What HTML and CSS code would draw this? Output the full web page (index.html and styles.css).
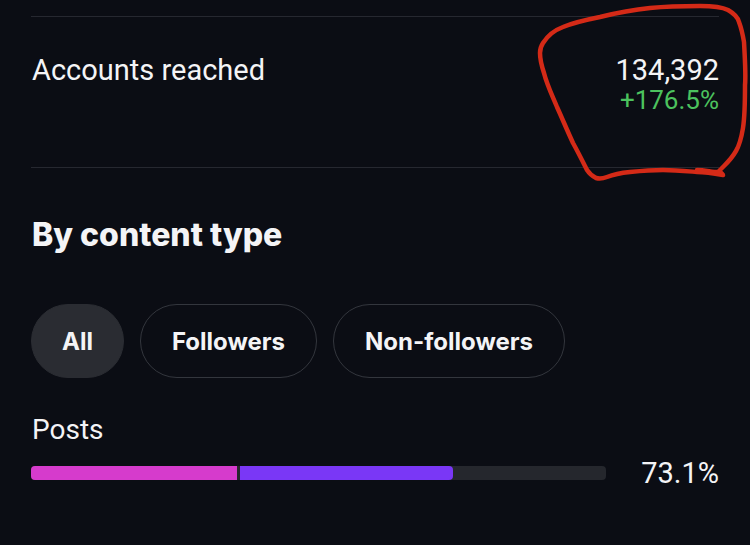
FILE: index.html
```html
<!DOCTYPE html>
<html>
<head>
<meta charset="utf-8">
<link rel="stylesheet" href="styles.css">
</head>
<body>
<div class="page">
  <div class="divider first"></div>
  <div class="metric">
    <div class="metric-label">Accounts reached</div>
    <div class="metric-values">
      <div class="metric-value">134,392</div>
      <div class="metric-change">+176.5%</div>
    </div>
  </div>
  <div class="divider"></div>
  <h2 class="section-title">By content type</h2>
  <div class="chips">
    <div class="chip active">All</div>
    <div class="chip">Followers</div>
    <div class="chip">Non-followers</div>
  </div>
  <div class="type-row">
    <div class="type-label">Posts</div>
    <div class="type-bar-row">
      <div class="bar">
        <div class="seg seg-followers" style="width:206px"></div>
        <div class="seg seg-non" style="width:213px"></div>
      </div>
      <div class="type-pct">73.1%</div>
    </div>
  </div>
</div>
<svg class="annotation" width="750" height="545" viewBox="0 0 750 545">
  <path d="M543 43 C548 35 555 30 563 27 C575 22 590 19 600 17 C620 12 640 9 650 8 C670 6 690 6 700 6 C712 6 722 7 728 10 C735 14 738 18 739 22 C742 30 743 36 744 42 C745 60 746 75 745 85 C745 100 745 115 743 128 C741 140 739 146 736 151 C732 158 728 162 724 166 C722 168 720 170 719 171 M723 175 C712 173 704 172 697 172 C685 171 675 170 663 170 C650 170 640 171 630 172 C620 173 612 175 607 177 C602 179 599 179 596 178 C592 176 589 173 587 170 C582 160 578 152 573 143 C567 130 562 118 557 107 C552 95 547 85 544 73 C541 64 540 58 540 53 C540 49 541 46 543 43 M697 170 C705 170 712 172 718 172 C720 172 722 173 723 175" />
</svg>
</body>
</html>
```
FILE: styles.css
```css
html, body {
  margin: 0;
  padding: 0;
  background: #0b0d14;
}
body {
  width: 750px;
  height: 545px;
  overflow: hidden;
  position: relative;
  font-family: Roboto, "Liberation Sans", sans-serif;
  color: #f4f4f6;
}
.page {
  padding: 0 31px;
}
.divider {
  height: 1px;
  background: #262830;
}
.divider.first {
  margin-top: 16px;
}
.metric {
  height: 150px;
  box-sizing: border-box;
  padding-top: 36px;
  display: flex;
  justify-content: space-between;
  align-items: flex-start;
}
.metric-label {
  font-size: 29px;
  line-height: 34px;
  padding-left: 1px;
}
.metric-values {
  text-align: right;
}
.metric-value {
  font-size: 29px;
  line-height: 34px;
}
.metric-change {
  font-size: 26px;
  line-height: 26px;
  color: #4cc25e;
}
.section-title {
  margin: 49px 0 0 1px;
  font-family: Inter, Roboto, sans-serif;
  font-size: 32px;
  line-height: 36px;
  font-weight: 800;
  letter-spacing: 0;
}
.chips {
  display: flex;
  gap: 16px;
  margin-top: 51px;
}
.chip {
  height: 74px;
  box-sizing: border-box;
  border: 1.5px solid #33363d;
  border-radius: 37px;
  padding: 0 31px;
  display: flex;
  align-items: center;
  font-family: Inter, Roboto, sans-serif;
  font-size: 24px;
  font-weight: 700;
}
.chip.active {
  background: #2a2c32;
  border-color: #2a2c32;
  padding: 0 30px;
}
.type-row {
  margin-top: 36px;
}
.type-label {
  font-size: 28px;
  line-height: 32px;
  padding-left: 1px;
}
.type-bar-row {
  display: flex;
  align-items: center;
  justify-content: space-between;
  margin-top: 20px;
  height: 14px;
}
.bar {
  width: 575px;
  height: 14px;
  border-radius: 4px;
  background: #25272d;
  display: flex;
  gap: 3px;
  overflow: hidden;
}
.seg {
  height: 100%;
}
.seg-followers {
  background: #d63bcc;
}
.seg-non {
  background: #7a37f6;
  border-radius: 0 4px 4px 0;
}
.type-pct {
  font-size: 29px;
  line-height: 34px;
}
.annotation {
  position: absolute;
  left: 0;
  top: 0;
  pointer-events: none;
}
.annotation path {
  fill: none;
  stroke: #d42a17;
  stroke-width: 4.5;
  stroke-linecap: round;
  stroke-linejoin: round;
}
```
